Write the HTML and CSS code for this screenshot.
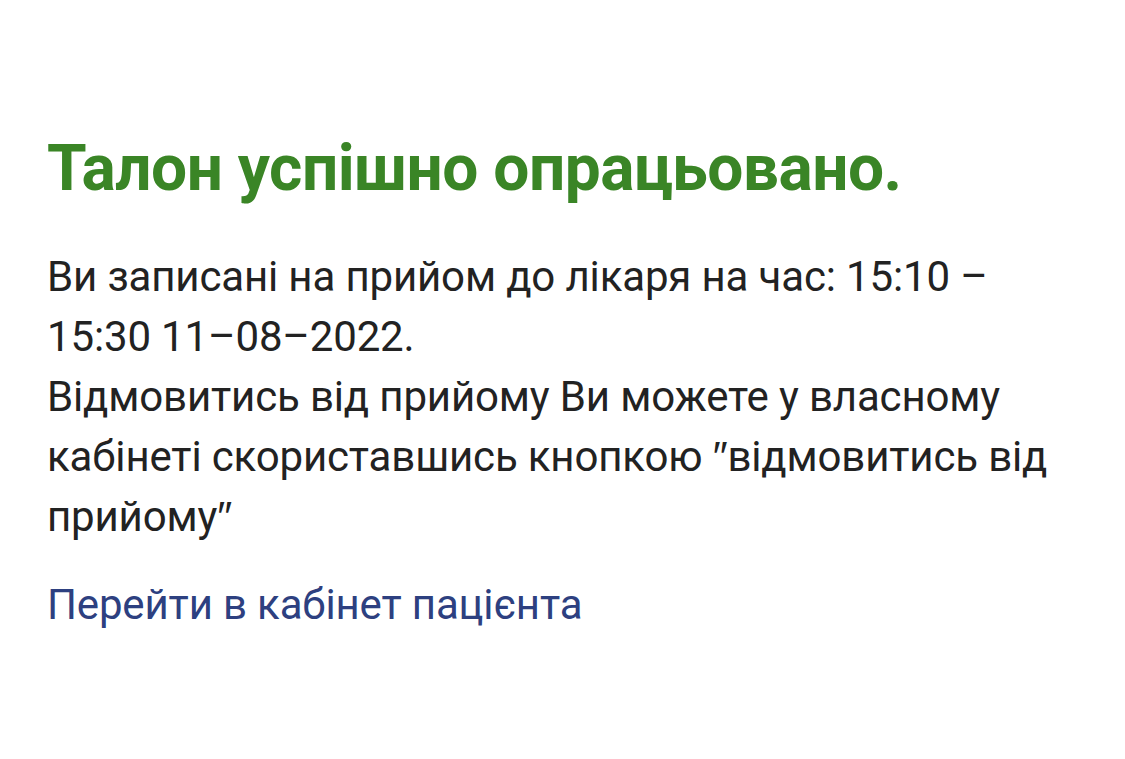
FILE: index.html
```html
<!DOCTYPE html>
<html lang="uk">
<head>
<meta charset="utf-8">
<link rel="stylesheet" href="styles.css">
</head>
<body>
<main class="page">
  <h1 class="title">Талон успішно опрацьовано.</h1>
  <p class="message">Ви записані на прийом до лікаря на час: 15:10 – 15:30 11–08–2022.<br>Відмовитись від прийому Ви можете у власному кабінеті скориставшись кнопкою <span class="q">″</span>відмовитись від прийому<span class="q">″</span></p>
  <a class="link" href="#">Перейти в кабінет пацієнта</a>
</main>
</body>
</html>
```
FILE: styles.css
```css
html, body {
  margin: 0;
  padding: 0;
  background: #ffffff;
}
.page {
  padding: 126px 47px 0 47px;
  width: 1010px;
  font-family: Roboto, "Liberation Sans", Arial, sans-serif;
}
.title {
  margin: 0;
  font-size: 64px;
  line-height: 86px;
  font-weight: 700;
  letter-spacing: -0.5px;
  color: #3a8526;
}
.message {
  margin: 35px 0 0 0;
  font-size: 42px;
  line-height: 60px;
  letter-spacing: -0.15px;
  color: #222222;
}
.q {
  font-family: "Liberation Sans", Arial, sans-serif;
}
.link {
  display: inline-block;
  margin-top: 28px;
  font-size: 42px;
  line-height: 60px;
  letter-spacing: -0.15px;
  color: #2d4080;
  text-decoration: none;
}
```
